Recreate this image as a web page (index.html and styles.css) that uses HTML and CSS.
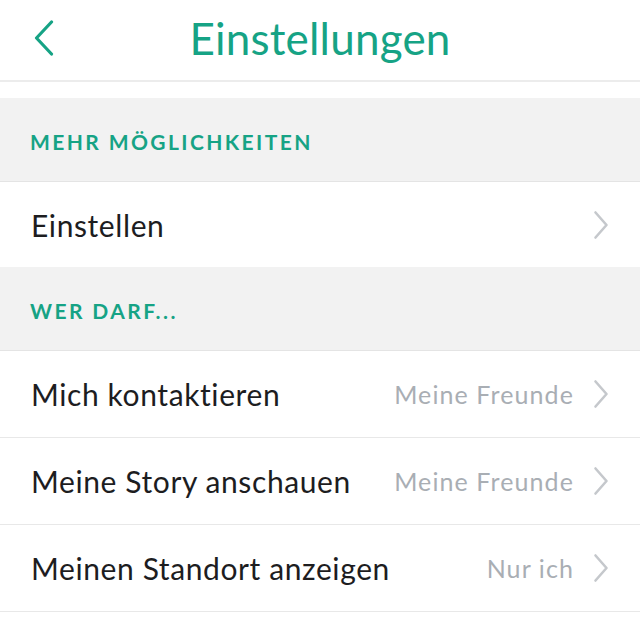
FILE: index.html
```html
<!DOCTYPE html>
<html lang="de">
<head>
<meta charset="utf-8">
<title>Einstellungen</title>
<link rel="stylesheet" href="styles.css">
</head>
<body>
<div class="app">
  <header class="topbar">
    <span class="back" aria-label="Zurück">
      <svg width="20" height="36" viewBox="0 0 20 36"><path d="M17.5 2 L2.5 18 L17.5 34" fill="none" stroke="#16a385" stroke-width="3.2" stroke-linecap="round" stroke-linejoin="round"/></svg>
    </span>
    <h1 class="title">Einstellungen</h1>
  </header>
  <div class="spacer"></div>

  <div class="section">MEHR MÖGLICHKEITEN</div>
  <div class="row first">
    <span class="label">Einstellen</span>
    <span class="right">
      <svg class="chev" width="16" height="30" viewBox="0 0 16 30"><path d="M2.5 2.5 L13.5 15 L2.5 27.5" fill="none" stroke="#c5c8cc" stroke-width="2.6" stroke-linecap="round" stroke-linejoin="round"/></svg>
    </span>
  </div>

  <div class="section">WER DARF...</div>
  <div class="row">
    <span class="label">Mich kontaktieren</span>
    <span class="right">
      <span class="value">Meine Freunde</span>
      <svg class="chev" width="16" height="30" viewBox="0 0 16 30"><path d="M2.5 2.5 L13.5 15 L2.5 27.5" fill="none" stroke="#c5c8cc" stroke-width="2.6" stroke-linecap="round" stroke-linejoin="round"/></svg>
    </span>
  </div>
  <div class="row">
    <span class="label">Meine Story anschauen</span>
    <span class="right">
      <span class="value">Meine Freunde</span>
      <svg class="chev" width="16" height="30" viewBox="0 0 16 30"><path d="M2.5 2.5 L13.5 15 L2.5 27.5" fill="none" stroke="#c5c8cc" stroke-width="2.6" stroke-linecap="round" stroke-linejoin="round"/></svg>
    </span>
  </div>
  <div class="row">
    <span class="label">Meinen Standort anzeigen</span>
    <span class="right">
      <span class="value">Nur ich</span>
      <svg class="chev" width="16" height="30" viewBox="0 0 16 30"><path d="M2.5 2.5 L13.5 15 L2.5 27.5" fill="none" stroke="#c5c8cc" stroke-width="2.6" stroke-linecap="round" stroke-linejoin="round"/></svg>
    </span>
  </div>
  <div class="tail"></div>
</div>
</body>
</html>
```

FILE: styles.css
```css
* { box-sizing: border-box; }
html, body {
  margin: 0;
  padding: 0;
  background: #ffffff;
}
body {
  font-family: Lato, "Noto Sans", "DejaVu Sans", sans-serif;
  color: #1d1d1f;
}
.app {
  width: 640px;
  height: 622px;
  overflow: hidden;
  display: flex;
  flex-direction: column;
}
.topbar {
  position: relative;
  height: 82px;
  flex: none;
  display: flex;
  align-items: center;
  justify-content: center;
  border-bottom: 2px solid #ececec;
}
.back {
  position: absolute;
  left: 34px;
  top: 20px;
  display: block;
  line-height: 0;
}
.title {
  margin: 0;
  font-weight: 400;
  font-size: 44px;
  color: #16a385;
  letter-spacing: 0.2px;
  line-height: 1;
  padding-bottom: 4px;
}
.spacer {
  height: 16px;
  flex: none;
}
.section {
  height: 84px;
  flex: none;
  background: #f2f2f2;
  border-bottom: 1px solid #e4e4e4;
  display: flex;
  align-items: center;
  padding: 4px 0 0 30px;
  font-size: 21px;
  font-weight: 700;
  letter-spacing: 2.4px;
  color: #16a385;
}
.row {
  height: 87px;
  flex: none;
  display: flex;
  align-items: center;
  justify-content: space-between;
  padding: 0 31px 0 31px;
  border-bottom: 1px solid #e8e8e8;
}
.row.first {
  height: 85px;
  border-bottom: none;
}
.label {
  font-size: 30px;
  letter-spacing: 0.6px;
  color: #1d1d1f;
}
.right {
  display: flex;
  align-items: center;
  gap: 19px;
}
.value {
  font-size: 25px;
  color: #a9aeb4;
  letter-spacing: 1.1px;
}
.chev {
  display: block;
}
.tail {
  flex: 1;
  background: #ffffff;
}
```
